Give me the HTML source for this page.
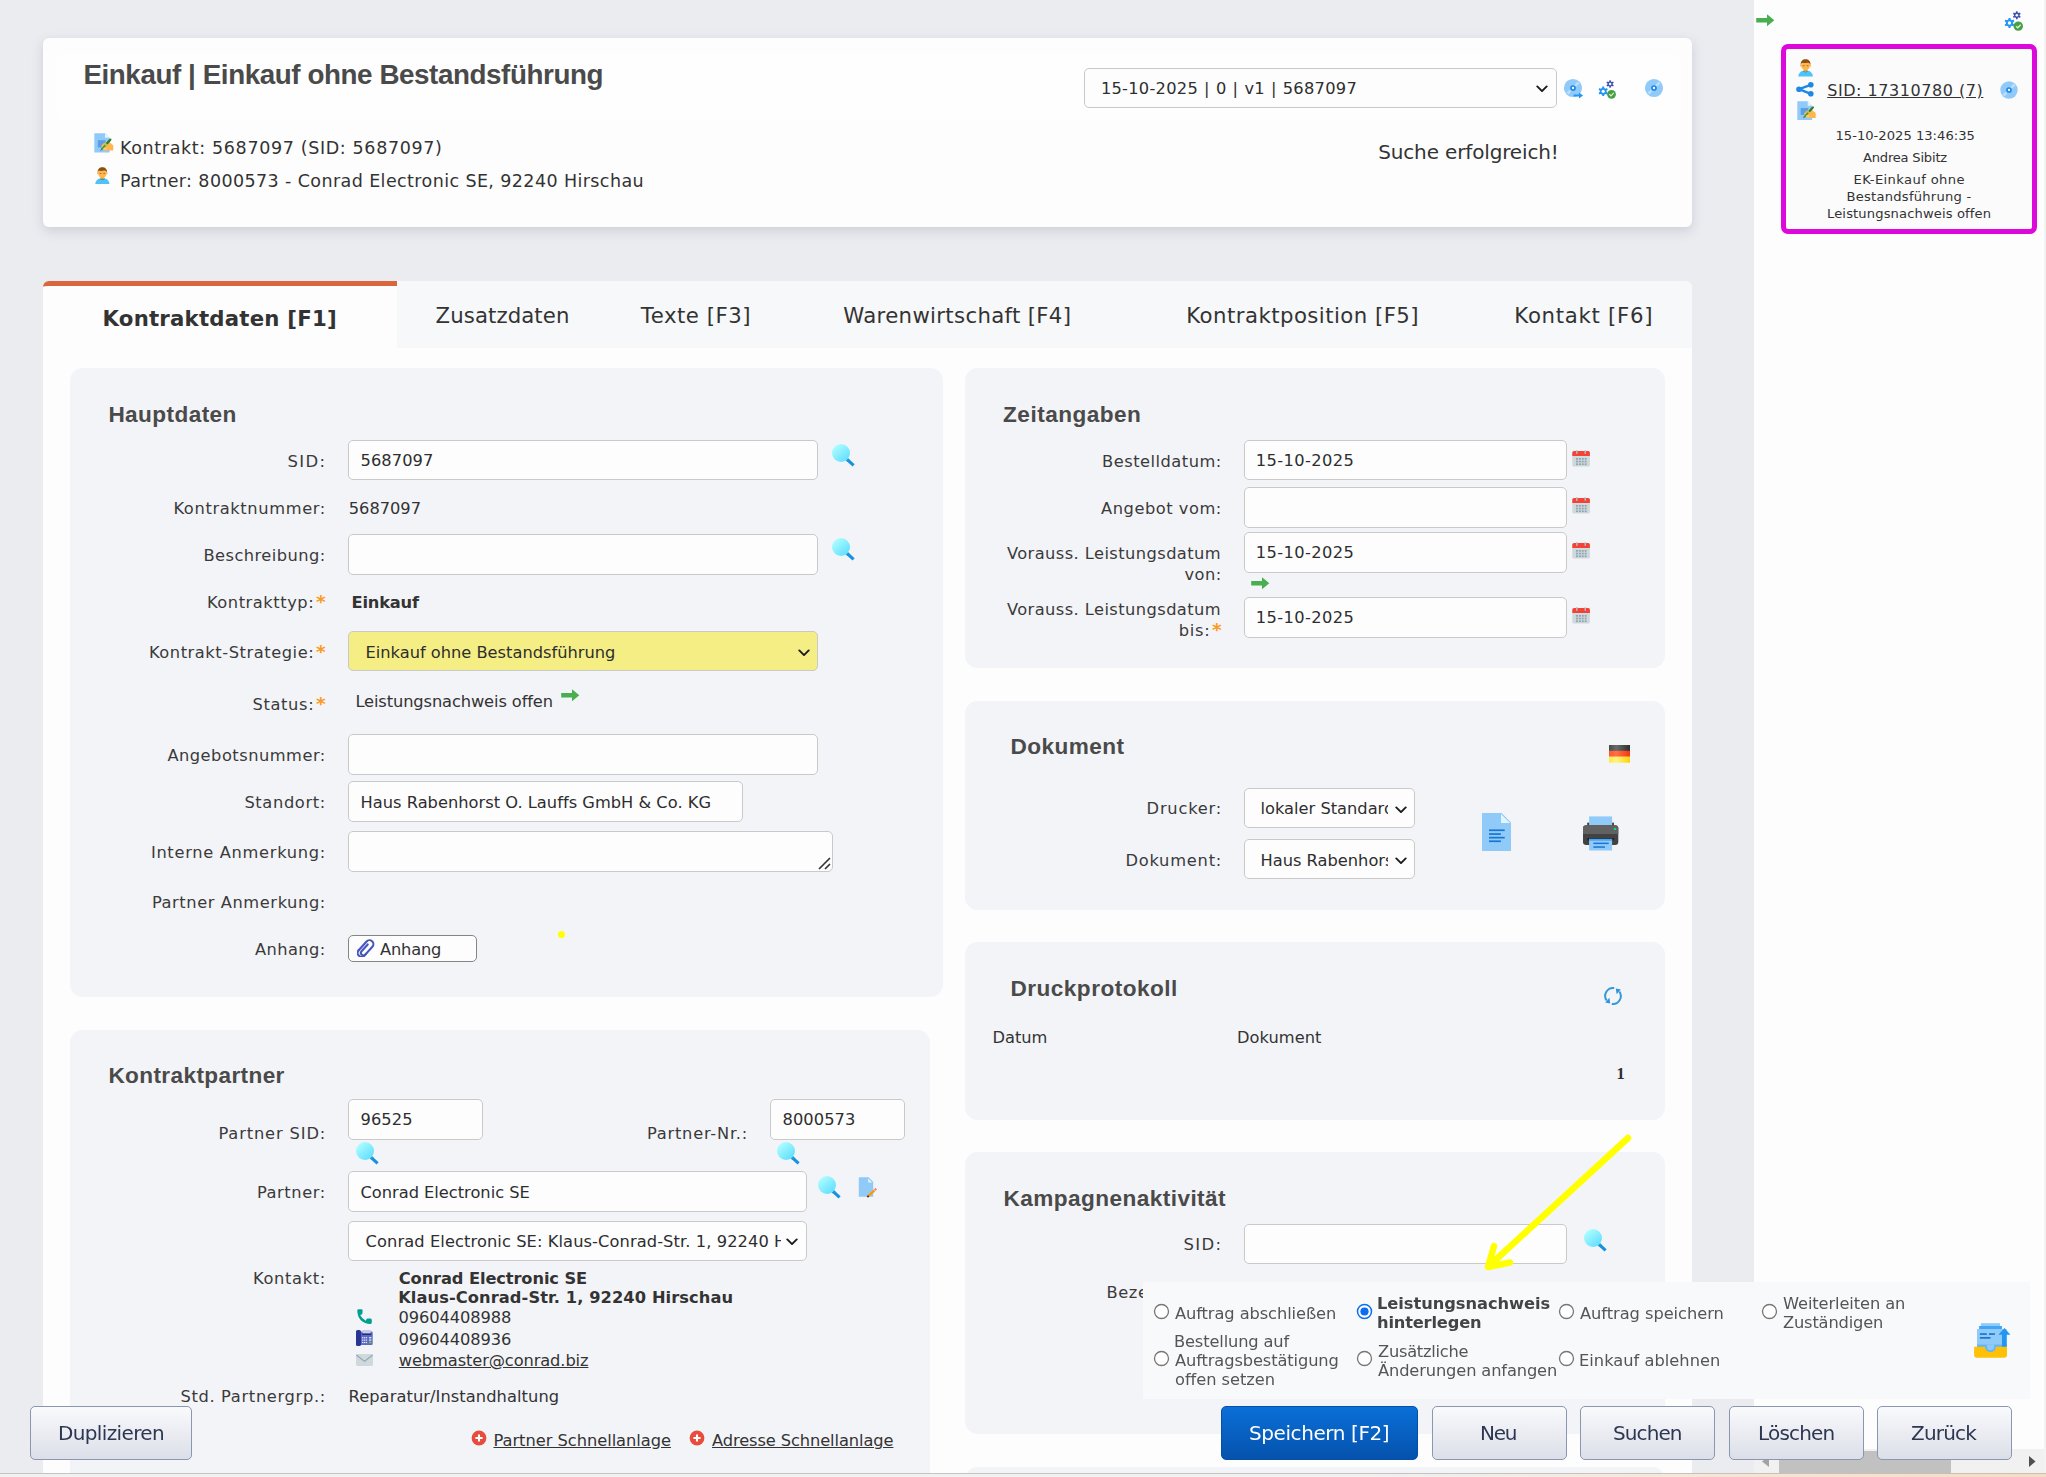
<!DOCTYPE html>
<html lang="de"><head><meta charset="utf-8"><title>Einkauf | Einkauf ohne Bestandsführung</title>
<style>
html,body{margin:0;padding:0;}
body{width:2046px;height:1477px;position:relative;overflow:hidden;background:#ebecf0;font-family:'DejaVu Sans', 'Liberation Sans', sans-serif;}
.b{position:absolute;box-sizing:border-box;margin:0;padding:0;}
.t{position:absolute;white-space:nowrap;margin:0;padding:0;line-height:normal;}
</style></head><body>
<header class="b" style="left:43px;top:38px;width:1649px;height:189px;background:#fdfdfe;border-radius:6px;box-shadow:0 4px 12px rgba(110,115,140,.24);"></header>
<div class="b" style="left:56px;top:54px;width:1625px;height:66px;background:#fefefe;border-radius:8px;"></div>
<nav class="b" style="left:43px;top:281px;width:1649px;height:67px;background:#f7f8fa;border-radius:6px 6px 0 0;"></nav>
<main class="b" style="left:43px;top:347.6px;width:1649px;height:1129.4px;background:#fdfdfe;"></main>
<div class="b" style="left:43px;top:281px;width:354px;height:67px;background:#fdfdfe;border-top:5px solid #d9663f;border-radius:6px 0 0 0;"></div>
<section class="b" style="left:70px;top:368px;width:873px;height:629px;background:#f3f4f8;border-radius:12.5px;"></section>
<section class="b" style="left:70px;top:1030px;width:860px;height:470px;background:#f3f4f8;border-radius:12.5px;"></section>
<section class="b" style="left:965px;top:368px;width:700px;height:300px;background:#f3f4f8;border-radius:12.5px;"></section>
<section class="b" style="left:965px;top:701px;width:700px;height:209px;background:#f3f4f8;border-radius:12.5px;"></section>
<section class="b" style="left:965px;top:942px;width:700px;height:178px;background:#f3f4f8;border-radius:12.5px;"></section>
<section class="b" style="left:965px;top:1152px;width:700px;height:282px;background:#f3f4f8;border-radius:12.5px;"></section>
<section class="b" style="left:965px;top:1467px;width:700px;height:133px;background:#f3f4f8;border-radius:12.5px;"></section>
<aside class="b" style="left:1754px;top:0px;width:290px;height:1477px;background:#fdfdfd;"></aside>
<div class="b" style="left:2044px;top:0px;width:2px;height:1477px;background:#f3f3f3;"></div>
<div class="b" style="left:1781px;top:44px;width:256px;height:190px;background:#fbfbfc;border-radius:7px;border:5px solid #dd08dc;"></div>
<h1 class="t" style="left:83.40px;top:59.00px;font:bold 27.8px 'Liberation Sans', 'DejaVu Sans', sans-serif;color:#4a4a4a;letter-spacing:-0.429px;">Einkauf | Einkauf ohne Bestandsführung</h1>
<span class="t" style="left:120.00px;top:138.00px;font:normal 17.5px 'DejaVu Sans', 'Liberation Sans', sans-serif;color:#333;letter-spacing:0.642px;">Kontrakt: 5687097 (SID: 5687097)</span>
<span class="t" style="left:120.00px;top:171.00px;font:normal 17.5px 'DejaVu Sans', 'Liberation Sans', sans-serif;color:#333;letter-spacing:0.401px;">Partner: 8000573 - Conrad Electronic SE, 92240 Hirschau</span>
<span class="t" style="left:1378.20px;top:140.00px;font:normal 20px 'DejaVu Sans', 'Liberation Sans', sans-serif;color:#333;letter-spacing:-0.146px;">Suche erfolgreich!</span>
<div class="b" style="left:1084px;top:68px;width:473px;height:40px;background:#fdfdfe;border-radius:5px;border:1px solid #c9c9c9;"></div>
<span class="t" style="left:1100.90px;top:79.00px;font:normal 16.25px 'DejaVu Sans', 'Liberation Sans', sans-serif;color:#2e2e2e;letter-spacing:0.270px;word-spacing:0.627px;">15-10-2025 | 0 | v1 | 5687097</span>
<svg class="b" style="left:1536.1px;top:84.5px;" width="12" height="8" viewBox="0 0 12 8"><path d="M1.3 1.4 L6 6.1 L10.7 1.4" fill="none" stroke="#1a1a1a" stroke-width="1.9" stroke-linecap="round" stroke-linejoin="round"/></svg>
<span class="t" style="left:102.50px;top:306.00px;font:bold 21.25px 'DejaVu Sans', 'Liberation Sans', sans-serif;color:#333;letter-spacing:0.221px;">Kontraktdaten [F1]</span>
<span class="t" style="left:435.60px;top:303.00px;font:normal 21.25px 'DejaVu Sans', 'Liberation Sans', sans-serif;color:#333;letter-spacing:0.078px;">Zusatzdaten</span>
<span class="t" style="left:640.80px;top:303.00px;font:normal 21.25px 'DejaVu Sans', 'Liberation Sans', sans-serif;color:#333;letter-spacing:0.518px;">Texte [F3]</span>
<span class="t" style="left:843.30px;top:303.00px;font:normal 21.25px 'DejaVu Sans', 'Liberation Sans', sans-serif;color:#333;letter-spacing:0.321px;">Warenwirtschaft [F4]</span>
<span class="t" style="left:1186.30px;top:303.00px;font:normal 21.25px 'DejaVu Sans', 'Liberation Sans', sans-serif;color:#333;letter-spacing:0.448px;">Kontraktposition [F5]</span>
<span class="t" style="left:1514.30px;top:303.00px;font:normal 21.25px 'DejaVu Sans', 'Liberation Sans', sans-serif;color:#333;letter-spacing:0.716px;">Kontakt [F6]</span>
<h2 class="t" style="left:108.40px;top:402.00px;font:bold 22.6px 'Liberation Sans', 'DejaVu Sans', sans-serif;color:#4a4a4a;letter-spacing:0.415px;">Hauptdaten</h2>
<label class="t" style="left:287.56px;top:452.00px;font:normal 16.45px 'DejaVu Sans', 'Liberation Sans', sans-serif;color:#3a3a3a;letter-spacing:1.300px;">SID:</label>
<div class="b" style="left:348px;top:440px;width:470px;height:40px;background:#fdfdfe;border-radius:5px;border:1px solid #c9c9c9;"></div>
<span class="t" style="left:360.60px;top:451.00px;font:normal 16.25px 'DejaVu Sans', 'Liberation Sans', sans-serif;color:#2e2e2e;letter-spacing:0.050px;">5687097</span>
<label class="t" style="left:173.40px;top:499.00px;font:normal 16.25px 'DejaVu Sans', 'Liberation Sans', sans-serif;color:#3a3a3a;letter-spacing:0.634px;">Kontraktnummer:</label>
<span class="t" style="left:348.80px;top:499.00px;font:normal 16.25px 'DejaVu Sans', 'Liberation Sans', sans-serif;color:#333;letter-spacing:-0.030px;">5687097</span>
<label class="t" style="left:203.40px;top:546.00px;font:normal 16.25px 'DejaVu Sans', 'Liberation Sans', sans-serif;color:#3a3a3a;letter-spacing:0.458px;">Beschreibung:</label>
<div class="b" style="left:348px;top:534px;width:470px;height:41px;background:#fdfdfe;border-radius:5px;border:1px solid #c9c9c9;"></div>
<span class="t" style="left:316.10px;top:591.00px;font:bold 18.5px 'DejaVu Sans', 'Liberation Sans', sans-serif;color:#fb9a22;">*</span>
<label class="t" style="left:206.90px;top:593.00px;font:normal 16.25px 'DejaVu Sans', 'Liberation Sans', sans-serif;color:#3a3a3a;letter-spacing:0.556px;">Kontrakttyp:</label>
<span class="t" style="left:351.50px;top:593.00px;font:bold 16.25px 'DejaVu Sans', 'Liberation Sans', sans-serif;color:#333;letter-spacing:-0.180px;">Einkauf</span>
<span class="t" style="left:316.10px;top:641.00px;font:bold 18.5px 'DejaVu Sans', 'Liberation Sans', sans-serif;color:#fb9a22;">*</span>
<label class="t" style="left:148.90px;top:643.00px;font:normal 16.25px 'DejaVu Sans', 'Liberation Sans', sans-serif;color:#3a3a3a;letter-spacing:0.557px;">Kontrakt-Strategie:</label>
<div class="b" style="left:348px;top:631px;width:470px;height:40px;background:#f5ee84;border-radius:5px;border:1px solid #c9c9c9;"></div>
<span class="t" style="left:365.50px;top:643.00px;font:normal 16.25px 'DejaVu Sans', 'Liberation Sans', sans-serif;color:#2e2e2e;letter-spacing:-0.006px;">Einkauf ohne Bestandsführung</span>
<svg class="b" style="left:797.6px;top:649.0px;" width="12" height="8" viewBox="0 0 12 8"><path d="M1.3 1.4 L6 6.1 L10.7 1.4" fill="none" stroke="#1a1a1a" stroke-width="1.9" stroke-linecap="round" stroke-linejoin="round"/></svg>
<span class="t" style="left:316.10px;top:693.00px;font:bold 18.5px 'DejaVu Sans', 'Liberation Sans', sans-serif;color:#fb9a22;">*</span>
<label class="t" style="left:252.40px;top:695.00px;font:normal 16.25px 'DejaVu Sans', 'Liberation Sans', sans-serif;color:#3a3a3a;letter-spacing:0.670px;">Status:</label>
<span class="t" style="left:355.40px;top:692.00px;font:normal 16.25px 'DejaVu Sans', 'Liberation Sans', sans-serif;color:#333;letter-spacing:-0.112px;">Leistungsnachweis offen</span>
<label class="t" style="left:167.40px;top:746.00px;font:normal 16.25px 'DejaVu Sans', 'Liberation Sans', sans-serif;color:#3a3a3a;letter-spacing:0.495px;">Angebotsnummer:</label>
<div class="b" style="left:348px;top:734px;width:470px;height:41px;background:#fdfdfe;border-radius:5px;border:1px solid #c9c9c9;"></div>
<label class="t" style="left:244.40px;top:793.00px;font:normal 16.25px 'DejaVu Sans', 'Liberation Sans', sans-serif;color:#3a3a3a;letter-spacing:0.643px;">Standort:</label>
<div class="b" style="left:348px;top:781px;width:395px;height:41px;background:#fdfdfe;border-radius:5px;border:1px solid #c9c9c9;"></div>
<span class="t" style="left:360.50px;top:793.00px;font:normal 16.25px 'DejaVu Sans', 'Liberation Sans', sans-serif;color:#2e2e2e;letter-spacing:0.016px;">Haus Rabenhorst O. Lauffs GmbH &amp; Co. KG</span>
<label class="t" style="left:150.90px;top:843.00px;font:normal 16.25px 'DejaVu Sans', 'Liberation Sans', sans-serif;color:#3a3a3a;letter-spacing:0.696px;">Interne Anmerkung:</label>
<div class="b" style="left:348px;top:831px;width:485px;height:41px;background:#fdfdfe;border-radius:5px;border:1px solid #c9c9c9;"></div>
<svg class="b" style="left:817px;top:856px;" width="14" height="14" viewBox="0 0 14 14"><path d="M2 13 L13 2 M8 13 L13 8" stroke="#333" stroke-width="1.6" fill="none"/></svg>
<label class="t" style="left:151.90px;top:893.00px;font:normal 16.25px 'DejaVu Sans', 'Liberation Sans', sans-serif;color:#3a3a3a;letter-spacing:0.584px;">Partner Anmerkung:</label>
<label class="t" style="left:254.90px;top:940.00px;font:normal 16.25px 'DejaVu Sans', 'Liberation Sans', sans-serif;color:#3a3a3a;letter-spacing:0.436px;">Anhang:</label>
<div class="b" style="left:348px;top:935px;width:129px;height:27px;background:#fdfdfe;border-radius:5px;border:1px solid #858585;"></div>
<span class="t" style="left:380.00px;top:940.00px;font:normal 16.25px 'DejaVu Sans', 'Liberation Sans', sans-serif;color:#333;letter-spacing:-0.194px;">Anhang</span>
<div class="b" style="left:557.5px;top:930.7px;width:7.0px;height:7.0px;background:#ffff00;border-radius:3.5px;"></div>
<h2 class="t" style="left:108.40px;top:1063.00px;font:bold 22.6px 'Liberation Sans', 'DejaVu Sans', sans-serif;color:#4a4a4a;letter-spacing:0.376px;">Kontraktpartner</h2>
<label class="t" style="left:218.40px;top:1124.00px;font:normal 16.25px 'DejaVu Sans', 'Liberation Sans', sans-serif;color:#3a3a3a;letter-spacing:0.869px;">Partner SID:</label>
<div class="b" style="left:348px;top:1099px;width:135px;height:41px;background:#fdfdfe;border-radius:5px;border:1px solid #c9c9c9;"></div>
<span class="t" style="left:360.60px;top:1110.00px;font:normal 16.25px 'DejaVu Sans', 'Liberation Sans', sans-serif;color:#2e2e2e;letter-spacing:0.050px;">96525</span>
<label class="t" style="left:646.90px;top:1124.00px;font:normal 16.25px 'DejaVu Sans', 'Liberation Sans', sans-serif;color:#3a3a3a;letter-spacing:0.773px;">Partner-Nr.:</label>
<div class="b" style="left:770px;top:1099px;width:135px;height:41px;background:#fdfdfe;border-radius:5px;border:1px solid #c9c9c9;"></div>
<span class="t" style="left:782.60px;top:1110.00px;font:normal 16.25px 'DejaVu Sans', 'Liberation Sans', sans-serif;color:#2e2e2e;letter-spacing:0.050px;">8000573</span>
<label class="t" style="left:256.90px;top:1183.00px;font:normal 16.25px 'DejaVu Sans', 'Liberation Sans', sans-serif;color:#3a3a3a;letter-spacing:0.590px;">Partner:</label>
<div class="b" style="left:348px;top:1171px;width:459px;height:41px;background:#fdfdfe;border-radius:5px;border:1px solid #c9c9c9;"></div>
<span class="t" style="left:360.50px;top:1183.00px;font:normal 16.25px 'DejaVu Sans', 'Liberation Sans', sans-serif;color:#2e2e2e;letter-spacing:-0.015px;">Conrad Electronic SE</span>
<div class="b" style="left:348px;top:1221px;width:459px;height:40px;background:#fdfdfe;border-radius:5px;border:1px solid #c9c9c9;"></div>
<div class="b" style="left:349px;top:1222px;width:431.5px;height:38px;overflow:hidden;">
<span class="t" style="left:16.60px;top:10.00px;font:normal 16.25px 'DejaVu Sans', 'Liberation Sans', sans-serif;color:#2e2e2e;letter-spacing:0.090px;">Conrad Electronic SE: Klaus-Conrad-Str. 1, 92240 Hirschau</span>
</div>
<svg class="b" style="left:786.0px;top:1238.3px;" width="12" height="8" viewBox="0 0 12 8"><path d="M1.3 1.4 L6 6.1 L10.7 1.4" fill="none" stroke="#1a1a1a" stroke-width="1.9" stroke-linecap="round" stroke-linejoin="round"/></svg>
<label class="t" style="left:252.90px;top:1269.00px;font:normal 16.25px 'DejaVu Sans', 'Liberation Sans', sans-serif;color:#3a3a3a;letter-spacing:0.672px;">Kontakt:</label>
<span class="t" style="left:398.80px;top:1269.00px;font:bold 16.25px 'DejaVu Sans', 'Liberation Sans', sans-serif;color:#333;letter-spacing:-0.112px;">Conrad Electronic SE</span>
<span class="t" style="left:398.20px;top:1288.00px;font:bold 16.25px 'DejaVu Sans', 'Liberation Sans', sans-serif;color:#333;letter-spacing:0.083px;">Klaus-Conrad-Str. 1, 92240 Hirschau</span>
<span class="t" style="left:398.50px;top:1308.00px;font:normal 16.25px 'DejaVu Sans', 'Liberation Sans', sans-serif;color:#333;letter-spacing:-0.089px;">09604408988</span>
<span class="t" style="left:398.50px;top:1330.00px;font:normal 16.25px 'DejaVu Sans', 'Liberation Sans', sans-serif;color:#333;letter-spacing:-0.089px;">09604408936</span>
<a class="t" style="left:398.80px;top:1351.00px;font:normal 16.25px 'DejaVu Sans', 'Liberation Sans', sans-serif;color:#333;letter-spacing:-0.110px;text-decoration:underline;">webmaster@conrad.biz</a>
<label class="t" style="left:180.40px;top:1387.00px;font:normal 16.25px 'DejaVu Sans', 'Liberation Sans', sans-serif;color:#3a3a3a;letter-spacing:0.676px;">Std. Partnergrp.:</label>
<span class="t" style="left:348.50px;top:1387.00px;font:normal 16.25px 'DejaVu Sans', 'Liberation Sans', sans-serif;color:#333;letter-spacing:0.077px;">Reparatur/Instandhaltung</span>
<a class="t" style="left:493.50px;top:1431.00px;font:normal 16.25px 'DejaVu Sans', 'Liberation Sans', sans-serif;color:#333;letter-spacing:-0.032px;text-decoration:underline;">Partner Schnellanlage</a>
<a class="t" style="left:712.00px;top:1431.00px;font:normal 16.25px 'DejaVu Sans', 'Liberation Sans', sans-serif;color:#333;letter-spacing:-0.099px;text-decoration:underline;">Adresse Schnellanlage</a>
<h2 class="t" style="left:1003.10px;top:402.00px;font:bold 22.6px 'Liberation Sans', 'DejaVu Sans', sans-serif;color:#4a4a4a;letter-spacing:0.473px;">Zeitangaben</h2>
<label class="t" style="left:1102.10px;top:452.00px;font:normal 16.25px 'DejaVu Sans', 'Liberation Sans', sans-serif;color:#3a3a3a;letter-spacing:0.493px;">Bestelldatum:</label>
<div class="b" style="left:1244px;top:440px;width:323px;height:40px;background:#fdfdfe;border-radius:5px;border:1px solid #c9c9c9;"></div>
<span class="t" style="left:1255.80px;top:451.00px;font:normal 16.25px 'DejaVu Sans', 'Liberation Sans', sans-serif;color:#2e2e2e;letter-spacing:0.390px;">15-10-2025</span>
<label class="t" style="left:1101.10px;top:499.00px;font:normal 16.25px 'DejaVu Sans', 'Liberation Sans', sans-serif;color:#3a3a3a;letter-spacing:0.526px;">Angebot vom:</label>
<div class="b" style="left:1244px;top:487px;width:323px;height:41px;background:#fdfdfe;border-radius:5px;border:1px solid #c9c9c9;"></div>
<label class="t" style="left:1006.90px;top:544.00px;font:normal 16.25px 'DejaVu Sans', 'Liberation Sans', sans-serif;color:#3a3a3a;letter-spacing:0.430px;">Vorauss. Leistungsdatum</label>
<label class="t" style="left:1184.40px;top:565.00px;font:normal 16.25px 'DejaVu Sans', 'Liberation Sans', sans-serif;color:#3a3a3a;letter-spacing:0.514px;">von:</label>
<div class="b" style="left:1244px;top:532px;width:323px;height:41px;background:#fdfdfe;border-radius:5px;border:1px solid #c9c9c9;"></div>
<span class="t" style="left:1255.80px;top:543.00px;font:normal 16.25px 'DejaVu Sans', 'Liberation Sans', sans-serif;color:#2e2e2e;letter-spacing:0.390px;">15-10-2025</span>
<label class="t" style="left:1006.90px;top:600.00px;font:normal 16.25px 'DejaVu Sans', 'Liberation Sans', sans-serif;color:#3a3a3a;letter-spacing:0.430px;">Vorauss. Leistungsdatum</label>
<span class="t" style="left:1212.10px;top:619.00px;font:bold 18.5px 'DejaVu Sans', 'Liberation Sans', sans-serif;color:#fb9a22;">*</span>
<label class="t" style="left:1178.70px;top:621.00px;font:normal 16.25px 'DejaVu Sans', 'Liberation Sans', sans-serif;color:#3a3a3a;letter-spacing:0.735px;">bis:</label>
<div class="b" style="left:1244px;top:597px;width:323px;height:41px;background:#fdfdfe;border-radius:5px;border:1px solid #c9c9c9;"></div>
<span class="t" style="left:1255.80px;top:608.00px;font:normal 16.25px 'DejaVu Sans', 'Liberation Sans', sans-serif;color:#2e2e2e;letter-spacing:0.390px;">15-10-2025</span>
<h2 class="t" style="left:1010.40px;top:734.00px;font:bold 22.6px 'Liberation Sans', 'DejaVu Sans', sans-serif;color:#4a4a4a;letter-spacing:0.466px;">Dokument</h2>
<label class="t" style="left:1146.60px;top:799.00px;font:normal 16.25px 'DejaVu Sans', 'Liberation Sans', sans-serif;color:#3a3a3a;letter-spacing:0.793px;">Drucker:</label>
<div class="b" style="left:1244px;top:788px;width:171px;height:40px;background:#fdfdfe;border-radius:5px;border:1px solid #c9c9c9;"></div>
<div class="b" style="left:1245px;top:789px;width:142.8px;height:38px;overflow:hidden;">
<span class="t" style="left:15.50px;top:10.00px;font:normal 16.25px 'DejaVu Sans', 'Liberation Sans', sans-serif;color:#2e2e2e;">lokaler Standarddrucker</span>
</div>
<svg class="b" style="left:1394.6px;top:805.5px;" width="12" height="8" viewBox="0 0 12 8"><path d="M1.3 1.4 L6 6.1 L10.7 1.4" fill="none" stroke="#1a1a1a" stroke-width="1.9" stroke-linecap="round" stroke-linejoin="round"/></svg>
<label class="t" style="left:1125.40px;top:851.00px;font:normal 16.25px 'DejaVu Sans', 'Liberation Sans', sans-serif;color:#3a3a3a;letter-spacing:0.780px;">Dokument:</label>
<div class="b" style="left:1244px;top:839px;width:171px;height:40px;background:#fdfdfe;border-radius:5px;border:1px solid #c9c9c9;"></div>
<div class="b" style="left:1245px;top:840px;width:142.8px;height:38px;overflow:hidden;">
<span class="t" style="left:15.50px;top:11.00px;font:normal 16.25px 'DejaVu Sans', 'Liberation Sans', sans-serif;color:#2e2e2e;">Haus Rabenhorst</span>
</div>
<svg class="b" style="left:1394.6px;top:856.5px;" width="12" height="8" viewBox="0 0 12 8"><path d="M1.3 1.4 L6 6.1 L10.7 1.4" fill="none" stroke="#1a1a1a" stroke-width="1.9" stroke-linecap="round" stroke-linejoin="round"/></svg>
<h2 class="t" style="left:1010.40px;top:976.00px;font:bold 22.6px 'Liberation Sans', 'DejaVu Sans', sans-serif;color:#4a4a4a;letter-spacing:0.484px;">Druckprotokoll</h2>
<span class="t" style="left:992.50px;top:1028.00px;font:normal 16.25px 'DejaVu Sans', 'Liberation Sans', sans-serif;color:#333;letter-spacing:-0.035px;">Datum</span>
<span class="t" style="left:1237.00px;top:1028.00px;font:normal 16.25px 'DejaVu Sans', 'Liberation Sans', sans-serif;color:#333;letter-spacing:0.030px;">Dokument</span>
<span class="t" style="left:1616.50px;top:1064.00px;font:bold 16.5px 'Liberation Serif', 'DejaVu Serif', serif;color:#2e2e2e;">1</span>
<h2 class="t" style="left:1003.40px;top:1186.00px;font:bold 22.6px 'Liberation Sans', 'DejaVu Sans', sans-serif;color:#4a4a4a;letter-spacing:0.443px;">Kampagnenaktivität</h2>
<label class="t" style="left:1183.56px;top:1235.00px;font:normal 16.45px 'DejaVu Sans', 'Liberation Sans', sans-serif;color:#3a3a3a;letter-spacing:1.300px;">SID:</label>
<div class="b" style="left:1244px;top:1224px;width:323px;height:40px;background:#fdfdfe;border-radius:5px;border:1px solid #c9c9c9;"></div>
<span class="t" style="left:1106.50px;top:1283.00px;font:normal 16.25px 'DejaVu Sans', 'Liberation Sans', sans-serif;color:#3a3a3a;letter-spacing:0.600px;">Bezeichnung:</span>
<div class="b" style="left:1143px;top:1282px;width:887px;height:117px;background:#f8f9fb;"></div>
<svg class="b" style="left:1153.2px;top:1302.6px;" width="17" height="17" viewBox="0 0 17 17"><circle cx="8.5" cy="8.5" r="7" fill="#fff" stroke="#767676" stroke-width="1.3"/></svg>
<span class="t" style="left:1175.00px;top:1304.00px;font:normal 16.25px 'DejaVu Sans', 'Liberation Sans', sans-serif;color:#555;letter-spacing:-0.087px;will-change:transform;">Auftrag abschließen</span>
<svg class="b" style="left:1356.0px;top:1302.6px;" width="17" height="17" viewBox="0 0 17 17"><circle cx="8.5" cy="8.5" r="7" fill="#fff" stroke="#0b6ff0" stroke-width="1.5"/><circle cx="8.5" cy="8.5" r="4.1" fill="#0b6ff0"/></svg>
<span class="t" style="left:1377.00px;top:1294.00px;font:bold 16.25px 'DejaVu Sans', 'Liberation Sans', sans-serif;color:#444;letter-spacing:-0.042px;will-change:transform;">Leistungsnachweis</span>
<span class="t" style="left:1377.00px;top:1313.00px;font:bold 16.25px 'DejaVu Sans', 'Liberation Sans', sans-serif;color:#444;letter-spacing:-0.175px;will-change:transform;">hinterlegen</span>
<svg class="b" style="left:1558.1px;top:1302.6px;" width="17" height="17" viewBox="0 0 17 17"><circle cx="8.5" cy="8.5" r="7" fill="#fff" stroke="#767676" stroke-width="1.3"/></svg>
<span class="t" style="left:1580.00px;top:1304.00px;font:normal 16.25px 'DejaVu Sans', 'Liberation Sans', sans-serif;color:#555;letter-spacing:-0.048px;will-change:transform;">Auftrag speichern</span>
<svg class="b" style="left:1760.5px;top:1302.6px;" width="17" height="17" viewBox="0 0 17 17"><circle cx="8.5" cy="8.5" r="7" fill="#fff" stroke="#767676" stroke-width="1.3"/></svg>
<span class="t" style="left:1783.00px;top:1294.00px;font:normal 16.25px 'DejaVu Sans', 'Liberation Sans', sans-serif;color:#555;letter-spacing:-0.107px;will-change:transform;">Weiterleiten an</span>
<span class="t" style="left:1783.00px;top:1313.00px;font:normal 16.25px 'DejaVu Sans', 'Liberation Sans', sans-serif;color:#555;letter-spacing:-0.167px;will-change:transform;">Zuständigen</span>
<svg class="b" style="left:1153.2px;top:1350px;" width="17" height="17" viewBox="0 0 17 17"><circle cx="8.5" cy="8.5" r="7" fill="#fff" stroke="#767676" stroke-width="1.3"/></svg>
<span class="t" style="left:1174.00px;top:1332.00px;font:normal 16.25px 'DejaVu Sans', 'Liberation Sans', sans-serif;color:#555;letter-spacing:-0.142px;will-change:transform;">Bestellung auf</span>
<span class="t" style="left:1175.00px;top:1351.00px;font:normal 16.25px 'DejaVu Sans', 'Liberation Sans', sans-serif;color:#555;letter-spacing:-0.114px;will-change:transform;">Auftragsbestätigung</span>
<span class="t" style="left:1175.00px;top:1370.00px;font:normal 16.25px 'DejaVu Sans', 'Liberation Sans', sans-serif;color:#555;letter-spacing:-0.042px;will-change:transform;">offen setzen</span>
<svg class="b" style="left:1356.0px;top:1350px;" width="17" height="17" viewBox="0 0 17 17"><circle cx="8.5" cy="8.5" r="7" fill="#fff" stroke="#767676" stroke-width="1.3"/></svg>
<span class="t" style="left:1378.00px;top:1342.00px;font:normal 16.25px 'DejaVu Sans', 'Liberation Sans', sans-serif;color:#555;letter-spacing:-0.252px;will-change:transform;">Zusätzliche</span>
<span class="t" style="left:1378.00px;top:1361.00px;font:normal 16.25px 'DejaVu Sans', 'Liberation Sans', sans-serif;color:#555;letter-spacing:-0.130px;will-change:transform;">Änderungen anfangen</span>
<svg class="b" style="left:1558.1px;top:1350px;" width="17" height="17" viewBox="0 0 17 17"><circle cx="8.5" cy="8.5" r="7" fill="#fff" stroke="#767676" stroke-width="1.3"/></svg>
<span class="t" style="left:1579.00px;top:1351.00px;font:normal 16.25px 'DejaVu Sans', 'Liberation Sans', sans-serif;color:#555;letter-spacing:0.018px;will-change:transform;">Einkauf ablehnen</span>
<div class="b" style="left:1754px;top:1449px;width:290px;height:24px;background:#f1f1f1;"></div>
<div class="b" style="left:1779px;top:1451px;width:172px;height:21.5px;background:#c1c1c1;"></div>
<svg class="b" style="left:1762px;top:1456px;" width="8" height="12" viewBox="0 0 8 12"><path d="M7 0 L7 11 L0 5.5 Z" fill="#a3a3a3"/></svg>
<svg class="b" style="left:2029px;top:1456px;" width="8" height="12" viewBox="0 0 8 12"><path d="M0 0 L0 11 L6.5 5.5 Z" fill="#505050"/></svg>
<button class="b" style="left:30px;top:1406px;width:162px;height:54px;background:linear-gradient(#f9fafc,#dcdfe8);border-radius:5px;border:1px solid #8b96b0;"></button>
<span class="t" style="left:58.00px;top:1421.00px;font:normal 20px 'DejaVu Sans', 'Liberation Sans', sans-serif;color:#2d3752;letter-spacing:-0.633px;will-change:transform;">Duplizieren</span>
<button class="b" style="left:1221px;top:1406px;width:197px;height:54px;background:linear-gradient(#0a6fd8,#0552ac);border-radius:5px;border:1px solid #0450a8;"></button>
<span class="t" style="left:1249.00px;top:1421.00px;font:normal 20px 'DejaVu Sans', 'Liberation Sans', sans-serif;color:#fff;letter-spacing:-0.413px;will-change:transform;">Speichern [F2]</span>
<button class="b" style="left:1432px;top:1406px;width:135px;height:54px;background:linear-gradient(#f9fafc,#dcdfe8);border-radius:5px;border:1px solid #8b96b0;"></button>
<span class="t" style="left:1480.00px;top:1421.00px;font:normal 20px 'DejaVu Sans', 'Liberation Sans', sans-serif;color:#2d3752;letter-spacing:-1.233px;will-change:transform;">Neu</span>
<button class="b" style="left:1580px;top:1406px;width:135px;height:54px;background:linear-gradient(#f9fafc,#dcdfe8);border-radius:5px;border:1px solid #8b96b0;"></button>
<span class="t" style="left:1613.00px;top:1421.00px;font:normal 20px 'DejaVu Sans', 'Liberation Sans', sans-serif;color:#2d3752;letter-spacing:-0.910px;will-change:transform;">Suchen</span>
<button class="b" style="left:1729px;top:1406px;width:135px;height:54px;background:linear-gradient(#f9fafc,#dcdfe8);border-radius:5px;border:1px solid #8b96b0;"></button>
<span class="t" style="left:1758.00px;top:1421.00px;font:normal 20px 'DejaVu Sans', 'Liberation Sans', sans-serif;color:#2d3752;letter-spacing:-0.821px;will-change:transform;">Löschen</span>
<button class="b" style="left:1877px;top:1406px;width:135px;height:54px;background:linear-gradient(#f9fafc,#dcdfe8);border-radius:5px;border:1px solid #8b96b0;"></button>
<span class="t" style="left:1911.00px;top:1421.00px;font:normal 20px 'DejaVu Sans', 'Liberation Sans', sans-serif;color:#2d3752;letter-spacing:-0.814px;will-change:transform;">Zurück</span>
<a class="t" style="left:1827.20px;top:81.00px;font:normal 16px 'DejaVu Sans', 'Liberation Sans', sans-serif;color:#333;letter-spacing:0.549px;text-decoration:underline;">SID: 17310780 (7)</a>
<span class="t" style="left:1835.50px;top:128.00px;font:normal 13.1px 'DejaVu Sans', 'Liberation Sans', sans-serif;color:#333;letter-spacing:0.015px;">15-10-2025 13:46:35</span>
<span class="t" style="left:1863.00px;top:150.00px;font:normal 13.1px 'DejaVu Sans', 'Liberation Sans', sans-serif;color:#333;letter-spacing:-0.220px;">Andrea Sibitz</span>
<span class="t" style="left:1853.50px;top:172.00px;font:normal 13.1px 'DejaVu Sans', 'Liberation Sans', sans-serif;color:#333;letter-spacing:0.395px;">EK-Einkauf ohne</span>
<span class="t" style="left:1846.50px;top:189.00px;font:normal 13.1px 'DejaVu Sans', 'Liberation Sans', sans-serif;color:#333;letter-spacing:0.243px;">Bestandsführung -</span>
<span class="t" style="left:1827.00px;top:206.00px;font:normal 13.1px 'DejaVu Sans', 'Liberation Sans', sans-serif;color:#333;letter-spacing:0.126px;">Leistungsnachweis offen</span>
<svg class="b" style="left:1470px;top:1125px;" width="175" height="160" viewBox="0 0 175 160"><g stroke="#ffff00" stroke-width="6.5" stroke-linecap="round" stroke-linejoin="round" fill="none"><path d="M158 13 L19 141"/><path d="M24 121 L18 142 L40 137.5"/></g></svg>
<div class="b" style="left:0px;top:1473px;width:2046px;height:1px;background:linear-gradient(to right,#c3c3c3 0,#c3c3c3 70%,#cbbfb4 92%);"></div>
<div class="b" style="left:0px;top:1474px;width:2046px;height:3px;background:linear-gradient(to right,#f1f1f1 0,#f1f1f1 66%,#f6e6d6 84%,#f6dcc4 100%);"></div>
<svg class="b" style="left:94px;top:133px;" width="20.0" height="20.0" viewBox="0 0 20 20"><path d="M0.3 0.2 H11 L15.6 4.8 V19.6 H0.3 Z" fill="#90caf9"/><path d="M11 0.2 L15.6 4.8 H11 Z" fill="#e3f2fd"/><rect x="3.8" y="7.2" width="7.8" height="7.2" fill="#5a9fe6"/><path d="M7 13.6 C8.5 10.6 10.8 9.2 12.6 9.6 L15.6 9.2 L19.3 12.5 V17.6 H11 C9 17.6 8.6 16 9.6 15.4 Z" fill="#ffb74d"/><path d="M16.2 6.9 L7.4 16.7" stroke="#43a047" stroke-width="1.9"/><path d="M16.4 6.6 L13.2 10.2" stroke="#2e7d32" stroke-width="2.2" stroke-linecap="round"/><path d="M12.6 10.9 L11.4 12.2" stroke="#c0ca33" stroke-width="2.1"/><path d="M7.8 16.2 L6.6 17.6" stroke="#455a64" stroke-width="1"/><path d="M9.3 15.2 C10.6 14.4 12.2 14.6 13 15.4 L12.4 16.6 H9.8 Z" fill="#ffcc80"/></svg>
<svg class="b" style="left:94.8px;top:167.2px;" width="14.72" height="17.48" viewBox="0 0 16 19"><path d="M0.2 18.4 C0.6 14.6 3.2 12.8 5.2 12.4 L10.8 12.4 C12.8 12.8 15.4 14.6 15.8 18.4 Z" fill="#4fc3f7"/><path d="M5.4 12.3 Q8 14.6 10.6 12.3 L10.6 13 Q8 15.3 5.4 13 Z" fill="#0288d1"/><path d="M6 9.5 H10 V12.4 Q8 14 6 12.4 Z" fill="#ff9800"/><ellipse cx="8" cy="6.6" rx="4.7" ry="5.3" fill="#ffb74d"/><circle cx="3" cy="7" r="0.9" fill="#ffb74d"/><circle cx="13" cy="7" r="0.9" fill="#ffb74d"/><path d="M2.9 6.3 C2.4 2.4 5 0.3 8 0.3 C11 0.3 13.6 2.4 13.1 6.3 C12.4 4.4 11.4 3.6 10 3.9 C8.5 4.3 5.6 4.6 4.2 3.9 C3.6 4.5 3.1 5.2 2.9 6.3 Z" fill="#8d4e12"/><rect x="5" y="6.7" width="2" height="0.9" fill="#a1662f"/><rect x="9" y="6.7" width="2" height="0.9" fill="#a1662f"/></svg>
<svg class="b" style="left:1563.0px;top:77.9px;" width="21" height="21" viewBox="0 0 21 21"><circle cx="10" cy="10" r="9.1" fill="#90caf9"/><path d="M14.6 3.6 L16.6 5.5 L12.5 9 L11 7.5 Z M7.5 11 L9 12.5 L5.5 16.4 L3.5 14.5 Z" fill="#bbdefb"/><circle cx="10" cy="10" r="2" fill="#fff" stroke="#1e88e5" stroke-width="1.7"/><path d="M10.6 16.4 H16 V14.6 L20 17.5 L16 20.4 V18.6 H10.6 Z" fill="#2196f3"/></svg>
<svg class="b" style="left:1598.3px;top:79.8px;" width="20.0" height="20.0" viewBox="0 0 20 20"><path d="M4.12 7.97 L4.28 6.49 L6.12 6.49 L6.28 7.97 L7.54 8.70 L8.91 8.10 L9.83 9.69 L8.62 10.57 L8.62 12.03 L9.83 12.91 L8.91 14.50 L7.54 13.90 L6.28 14.63 L6.12 16.11 L4.28 16.11 L4.12 14.63 L2.86 13.90 L1.49 14.50 L0.57 12.91 L1.78 12.03 L1.78 10.57 L0.57 9.69 L1.49 8.10 L2.86 8.70 Z" fill="#2196f3"/><circle cx="5.2" cy="11.3" r="1.6" fill="#fff"/><path d="M11.27 1.43 L11.37 0.17 L12.83 0.17 L12.93 1.43 L13.91 1.99 L15.05 1.45 L15.78 2.72 L14.74 3.44 L14.74 4.56 L15.78 5.28 L15.05 6.55 L13.91 6.01 L12.93 6.57 L12.83 7.83 L11.37 7.83 L11.27 6.57 L10.29 6.01 L9.15 6.55 L8.42 5.28 L9.46 4.56 L9.46 3.44 L8.42 2.72 L9.15 1.45 L10.29 1.99 Z" fill="#3f51b5"/><circle cx="12.1" cy="4.0" r="1.2" fill="#fff"/><circle cx="13.5" cy="14.3" r="4.4" fill="#43a047"/><path d="M11.4 14.3 L13 15.9 L15.8 12.9" fill="none" stroke="#dcedc8" stroke-width="1.3"/></svg>
<svg class="b" style="left:1643.9px;top:77.9px;" width="21" height="21" viewBox="0 0 21 21"><circle cx="10" cy="10" r="9.1" fill="#90caf9"/><path d="M14.6 3.6 L16.6 5.5 L12.5 9 L11 7.5 Z M7.5 11 L9 12.5 L5.5 16.4 L3.5 14.5 Z" fill="#bbdefb"/><circle cx="10" cy="10" r="2" fill="#fff" stroke="#1e88e5" stroke-width="1.7"/></svg>
<svg class="b" style="left:1755.7px;top:14.4px;" width="19" height="13" viewBox="0 0 19 13"><path d="M0.2 4.1 H11 V0.2 L18.3 6.2 L11 12.3 V8.5 H0.2 Z" fill="#48ae4f"/></svg>
<svg class="b" style="left:2004.2px;top:11.3px;" width="21.200000000000003" height="21.200000000000003" viewBox="0 0 20 20"><path d="M4.12 7.97 L4.28 6.49 L6.12 6.49 L6.28 7.97 L7.54 8.70 L8.91 8.10 L9.83 9.69 L8.62 10.57 L8.62 12.03 L9.83 12.91 L8.91 14.50 L7.54 13.90 L6.28 14.63 L6.12 16.11 L4.28 16.11 L4.12 14.63 L2.86 13.90 L1.49 14.50 L0.57 12.91 L1.78 12.03 L1.78 10.57 L0.57 9.69 L1.49 8.10 L2.86 8.70 Z" fill="#2196f3"/><circle cx="5.2" cy="11.3" r="1.6" fill="#fff"/><path d="M11.27 1.43 L11.37 0.17 L12.83 0.17 L12.93 1.43 L13.91 1.99 L15.05 1.45 L15.78 2.72 L14.74 3.44 L14.74 4.56 L15.78 5.28 L15.05 6.55 L13.91 6.01 L12.93 6.57 L12.83 7.83 L11.37 7.83 L11.27 6.57 L10.29 6.01 L9.15 6.55 L8.42 5.28 L9.46 4.56 L9.46 3.44 L8.42 2.72 L9.15 1.45 L10.29 1.99 Z" fill="#3f51b5"/><circle cx="12.1" cy="4.0" r="1.2" fill="#fff"/><circle cx="13.5" cy="14.3" r="4.4" fill="#43a047"/><path d="M11.4 14.3 L13 15.9 L15.8 12.9" fill="none" stroke="#dcedc8" stroke-width="1.3"/></svg>
<svg class="b" style="left:1797.6px;top:59px;" width="15.2" height="18.05" viewBox="0 0 16 19"><path d="M0.2 18.4 C0.6 14.6 3.2 12.8 5.2 12.4 L10.8 12.4 C12.8 12.8 15.4 14.6 15.8 18.4 Z" fill="#4fc3f7"/><path d="M5.4 12.3 Q8 14.6 10.6 12.3 L10.6 13 Q8 15.3 5.4 13 Z" fill="#0288d1"/><path d="M6 9.5 H10 V12.4 Q8 14 6 12.4 Z" fill="#ff9800"/><ellipse cx="8" cy="6.6" rx="4.7" ry="5.3" fill="#ffb74d"/><circle cx="3" cy="7" r="0.9" fill="#ffb74d"/><circle cx="13" cy="7" r="0.9" fill="#ffb74d"/><path d="M2.9 6.3 C2.4 2.4 5 0.3 8 0.3 C11 0.3 13.6 2.4 13.1 6.3 C12.4 4.4 11.4 3.6 10 3.9 C8.5 4.3 5.6 4.6 4.2 3.9 C3.6 4.5 3.1 5.2 2.9 6.3 Z" fill="#8d4e12"/><rect x="5" y="6.7" width="2" height="0.9" fill="#a1662f"/><rect x="9" y="6.7" width="2" height="0.9" fill="#a1662f"/></svg>
<svg class="b" style="left:1795.8px;top:81.8px;" width="18" height="15" viewBox="0 0 18 15"><path d="M3 7.2 L14.8 2.8 M3 7.2 L14.8 11.8" stroke="#1e88e5" stroke-width="2.5" fill="none"/><circle cx="3" cy="7.2" r="2.8" fill="#1e88e5"/><circle cx="14.8" cy="2.8" r="2.8" fill="#1e88e5"/><circle cx="14.8" cy="11.8" r="2.8" fill="#1e88e5"/></svg>
<svg class="b" style="left:1797px;top:100.8px;" width="19.4" height="19.4" viewBox="0 0 20 20"><path d="M0.3 0.2 H11 L15.6 4.8 V19.6 H0.3 Z" fill="#90caf9"/><path d="M11 0.2 L15.6 4.8 H11 Z" fill="#e3f2fd"/><rect x="3.8" y="7.2" width="7.8" height="7.2" fill="#5a9fe6"/><path d="M7 13.6 C8.5 10.6 10.8 9.2 12.6 9.6 L15.6 9.2 L19.3 12.5 V17.6 H11 C9 17.6 8.6 16 9.6 15.4 Z" fill="#ffb74d"/><path d="M16.2 6.9 L7.4 16.7" stroke="#43a047" stroke-width="1.9"/><path d="M16.4 6.6 L13.2 10.2" stroke="#2e7d32" stroke-width="2.2" stroke-linecap="round"/><path d="M12.6 10.9 L11.4 12.2" stroke="#c0ca33" stroke-width="2.1"/><path d="M7.8 16.2 L6.6 17.6" stroke="#455a64" stroke-width="1"/><path d="M9.3 15.2 C10.6 14.4 12.2 14.6 13 15.4 L12.4 16.6 H9.8 Z" fill="#ffcc80"/></svg>
<svg class="b" style="left:1999.4px;top:79.5px;" width="21" height="21" viewBox="0 0 21 21"><circle cx="10" cy="10" r="8.7" fill="#90caf9"/><path d="M14.6 3.6 L16.6 5.5 L12.5 9 L11 7.5 Z M7.5 11 L9 12.5 L5.5 16.4 L3.5 14.5 Z" fill="#bbdefb"/><circle cx="10" cy="10" r="2" fill="#fff" stroke="#1e88e5" stroke-width="1.7"/></svg>
<svg class="b" style="left:831.0px;top:443.1px;" width="25" height="25" viewBox="0 0 25 25"><defs><linearGradient id="mg1" x1="0.15" y1="0.1" x2="0.85" y2="0.9"><stop offset="0" stop-color="#aefeff"/><stop offset="1" stop-color="#62deff"/></linearGradient></defs><path d="M16.3 16.6 L22.6 22.4" stroke="#1591e2" stroke-width="3.1" stroke-linecap="butt"/><path d="M15.6 16 L17.6 17.8" stroke="#1d9ad0" stroke-width="3.1"/><circle cx="10" cy="10" r="9" fill="url(#mg1)"/></svg>
<svg class="b" style="left:831.0px;top:537.1px;" width="25" height="25" viewBox="0 0 25 25"><defs><linearGradient id="mg2" x1="0.15" y1="0.1" x2="0.85" y2="0.9"><stop offset="0" stop-color="#aefeff"/><stop offset="1" stop-color="#62deff"/></linearGradient></defs><path d="M16.3 16.6 L22.6 22.4" stroke="#1591e2" stroke-width="3.1" stroke-linecap="butt"/><path d="M15.6 16 L17.6 17.8" stroke="#1d9ad0" stroke-width="3.1"/><circle cx="10" cy="10" r="9" fill="url(#mg2)"/></svg>
<svg class="b" style="left:355.0px;top:1141px;" width="25" height="25" viewBox="0 0 25 25"><defs><linearGradient id="mg3" x1="0.15" y1="0.1" x2="0.85" y2="0.9"><stop offset="0" stop-color="#aefeff"/><stop offset="1" stop-color="#62deff"/></linearGradient></defs><path d="M16.3 16.6 L22.6 22.4" stroke="#1591e2" stroke-width="3.1" stroke-linecap="butt"/><path d="M15.6 16 L17.6 17.8" stroke="#1d9ad0" stroke-width="3.1"/><circle cx="10" cy="10" r="9" fill="url(#mg3)"/></svg>
<svg class="b" style="left:776.0px;top:1141px;" width="25" height="25" viewBox="0 0 25 25"><defs><linearGradient id="mg4" x1="0.15" y1="0.1" x2="0.85" y2="0.9"><stop offset="0" stop-color="#aefeff"/><stop offset="1" stop-color="#62deff"/></linearGradient></defs><path d="M16.3 16.6 L22.6 22.4" stroke="#1591e2" stroke-width="3.1" stroke-linecap="butt"/><path d="M15.6 16 L17.6 17.8" stroke="#1d9ad0" stroke-width="3.1"/><circle cx="10" cy="10" r="9" fill="url(#mg4)"/></svg>
<svg class="b" style="left:817.0px;top:1175.0px;" width="25" height="25" viewBox="0 0 25 25"><defs><linearGradient id="mg5" x1="0.15" y1="0.1" x2="0.85" y2="0.9"><stop offset="0" stop-color="#aefeff"/><stop offset="1" stop-color="#62deff"/></linearGradient></defs><path d="M16.3 16.6 L22.6 22.4" stroke="#1591e2" stroke-width="3.1" stroke-linecap="butt"/><path d="M15.6 16 L17.6 17.8" stroke="#1d9ad0" stroke-width="3.1"/><circle cx="10" cy="10" r="9" fill="url(#mg5)"/></svg>
<svg class="b" style="left:1582.8px;top:1228.0px;" width="25" height="25" viewBox="0 0 25 25"><defs><linearGradient id="mg6" x1="0.15" y1="0.1" x2="0.85" y2="0.9"><stop offset="0" stop-color="#aefeff"/><stop offset="1" stop-color="#62deff"/></linearGradient></defs><path d="M16.3 16.6 L22.6 22.4" stroke="#1591e2" stroke-width="3.1" stroke-linecap="butt"/><path d="M15.6 16 L17.6 17.8" stroke="#1d9ad0" stroke-width="3.1"/><circle cx="10" cy="10" r="9" fill="url(#mg6)"/></svg>
<svg class="b" style="left:858px;top:1177px;" width="20" height="21" viewBox="0 0 20 21"><path d="M0.8 0.2 H10.6 L15.2 4.8 V19.8 H0.8 Z" fill="#90caf9"/><path d="M10.2 1.4 L14.2 5.4 H10.2 Z" fill="#e1f5fe"/><path d="M10 19.4 L17.2 12.6" stroke="#ff9800" stroke-width="2.3"/><path d="M9.4 20 L10.6 18.8" stroke="#3e2723" stroke-width="1.8"/><path d="M17 12.8 L18.2 11.7" stroke="#ef7c7c" stroke-width="2.3"/><path d="M16.2 13.5 L17 12.8" stroke="#cfd8dc" stroke-width="2.3"/></svg>
<svg class="b" style="left:560.6px;top:688.7px;" width="19" height="13" viewBox="0 0 19 13"><path d="M0.2 4.1 H11 V0.2 L18.3 6.2 L11 12.3 V8.5 H0.2 Z" fill="#48ae4f"/></svg>
<svg class="b" style="left:1250.8px;top:577.2px;" width="19" height="13" viewBox="0 0 19 13"><path d="M0.2 4.1 H11 V0.2 L18.3 6.2 L11 12.3 V8.5 H0.2 Z" fill="#48ae4f"/></svg>
<svg class="b" style="left:1572px;top:450px;" width="18" height="17" viewBox="0 0 18 17"><rect x="0.3" y="1" width="17.6" height="15.6" rx="1.6" fill="#cfd8dc"/><path d="M0.3 6.3 V2.8 Q0.3 1 2.1 1 H16.1 Q17.9 1 17.9 2.8 V6.3 Z" fill="#f44336"/><rect x="0.3" y="6.2" width="17.6" height="0.8" fill="#cfe6ea"/><rect x="4.1" y="0" width="1.5" height="3.9" rx="0.7" fill="#b0bec5"/><rect x="12.5" y="0" width="1.5" height="3.9" rx="0.7" fill="#b0bec5"/><g fill="#8fa4ae"><rect x="4.0" y="8.0" width="1.9" height="1.7"/><rect x="6.9" y="8.0" width="1.9" height="1.7"/><rect x="9.8" y="8.0" width="1.9" height="1.7"/><rect x="12.7" y="8.0" width="1.9" height="1.7"/><rect x="4.0" y="10.7" width="1.9" height="1.7"/><rect x="6.9" y="10.7" width="1.9" height="1.7"/><rect x="9.8" y="10.7" width="1.9" height="1.7"/><rect x="12.7" y="10.7" width="1.9" height="1.7"/><rect x="4.0" y="13.4" width="1.9" height="1.7"/><rect x="6.9" y="13.4" width="1.9" height="1.7"/><rect x="9.8" y="13.4" width="1.9" height="1.7"/><rect x="12.7" y="13.4" width="1.9" height="1.7"/></g></svg>
<svg class="b" style="left:1572px;top:497px;" width="18" height="17" viewBox="0 0 18 17"><rect x="0.3" y="1" width="17.6" height="15.6" rx="1.6" fill="#cfd8dc"/><path d="M0.3 6.3 V2.8 Q0.3 1 2.1 1 H16.1 Q17.9 1 17.9 2.8 V6.3 Z" fill="#f44336"/><rect x="0.3" y="6.2" width="17.6" height="0.8" fill="#cfe6ea"/><rect x="4.1" y="0" width="1.5" height="3.9" rx="0.7" fill="#b0bec5"/><rect x="12.5" y="0" width="1.5" height="3.9" rx="0.7" fill="#b0bec5"/><g fill="#8fa4ae"><rect x="4.0" y="8.0" width="1.9" height="1.7"/><rect x="6.9" y="8.0" width="1.9" height="1.7"/><rect x="9.8" y="8.0" width="1.9" height="1.7"/><rect x="12.7" y="8.0" width="1.9" height="1.7"/><rect x="4.0" y="10.7" width="1.9" height="1.7"/><rect x="6.9" y="10.7" width="1.9" height="1.7"/><rect x="9.8" y="10.7" width="1.9" height="1.7"/><rect x="12.7" y="10.7" width="1.9" height="1.7"/><rect x="4.0" y="13.4" width="1.9" height="1.7"/><rect x="6.9" y="13.4" width="1.9" height="1.7"/><rect x="9.8" y="13.4" width="1.9" height="1.7"/><rect x="12.7" y="13.4" width="1.9" height="1.7"/></g></svg>
<svg class="b" style="left:1572px;top:542px;" width="18" height="17" viewBox="0 0 18 17"><rect x="0.3" y="1" width="17.6" height="15.6" rx="1.6" fill="#cfd8dc"/><path d="M0.3 6.3 V2.8 Q0.3 1 2.1 1 H16.1 Q17.9 1 17.9 2.8 V6.3 Z" fill="#f44336"/><rect x="0.3" y="6.2" width="17.6" height="0.8" fill="#cfe6ea"/><rect x="4.1" y="0" width="1.5" height="3.9" rx="0.7" fill="#b0bec5"/><rect x="12.5" y="0" width="1.5" height="3.9" rx="0.7" fill="#b0bec5"/><g fill="#8fa4ae"><rect x="4.0" y="8.0" width="1.9" height="1.7"/><rect x="6.9" y="8.0" width="1.9" height="1.7"/><rect x="9.8" y="8.0" width="1.9" height="1.7"/><rect x="12.7" y="8.0" width="1.9" height="1.7"/><rect x="4.0" y="10.7" width="1.9" height="1.7"/><rect x="6.9" y="10.7" width="1.9" height="1.7"/><rect x="9.8" y="10.7" width="1.9" height="1.7"/><rect x="12.7" y="10.7" width="1.9" height="1.7"/><rect x="4.0" y="13.4" width="1.9" height="1.7"/><rect x="6.9" y="13.4" width="1.9" height="1.7"/><rect x="9.8" y="13.4" width="1.9" height="1.7"/><rect x="12.7" y="13.4" width="1.9" height="1.7"/></g></svg>
<svg class="b" style="left:1572px;top:607px;" width="18" height="17" viewBox="0 0 18 17"><rect x="0.3" y="1" width="17.6" height="15.6" rx="1.6" fill="#cfd8dc"/><path d="M0.3 6.3 V2.8 Q0.3 1 2.1 1 H16.1 Q17.9 1 17.9 2.8 V6.3 Z" fill="#f44336"/><rect x="0.3" y="6.2" width="17.6" height="0.8" fill="#cfe6ea"/><rect x="4.1" y="0" width="1.5" height="3.9" rx="0.7" fill="#b0bec5"/><rect x="12.5" y="0" width="1.5" height="3.9" rx="0.7" fill="#b0bec5"/><g fill="#8fa4ae"><rect x="4.0" y="8.0" width="1.9" height="1.7"/><rect x="6.9" y="8.0" width="1.9" height="1.7"/><rect x="9.8" y="8.0" width="1.9" height="1.7"/><rect x="12.7" y="8.0" width="1.9" height="1.7"/><rect x="4.0" y="10.7" width="1.9" height="1.7"/><rect x="6.9" y="10.7" width="1.9" height="1.7"/><rect x="9.8" y="10.7" width="1.9" height="1.7"/><rect x="12.7" y="10.7" width="1.9" height="1.7"/><rect x="4.0" y="13.4" width="1.9" height="1.7"/><rect x="6.9" y="13.4" width="1.9" height="1.7"/><rect x="9.8" y="13.4" width="1.9" height="1.7"/><rect x="12.7" y="13.4" width="1.9" height="1.7"/></g></svg>
<svg class="b" style="left:1609px;top:745px;" width="21" height="18" viewBox="0 0 21 18"><defs><linearGradient id="fl1" x1="0" x2="1"><stop offset="0" stop-color="#4a4a4a"/><stop offset=".35" stop-color="#6a6a6a"/><stop offset="1" stop-color="#2f2f2f"/></linearGradient><linearGradient id="fl2" x1="0" x2="1"><stop offset="0" stop-color="#ff5a2e"/><stop offset=".35" stop-color="#ff7043"/><stop offset="1" stop-color="#f4360f"/></linearGradient><linearGradient id="fl3" x1="0" x2="1"><stop offset="0" stop-color="#ffe94a"/><stop offset=".35" stop-color="#fff47a"/><stop offset="1" stop-color="#fdd10a"/></linearGradient></defs><rect x="0" y="0" width="21" height="6" fill="url(#fl1)"/><rect x="0" y="5.8" width="21" height="6" fill="url(#fl2)"/><rect x="0" y="11.7" width="21" height="6" fill="url(#fl3)"/></svg>
<svg class="b" style="left:1482px;top:813px;" width="29" height="38" viewBox="0 0 29 38"><path d="M0 0 H19.6 L29 9.6 V38 H0 Z" fill="#90caf9"/><path d="M19 1 L28 10 H19 Z" fill="#e1f5fe"/><g fill="#1976d2"><rect x="7" y="16.4" width="15.7" height="1.7"/><rect x="7" y="20.2" width="11.9" height="1.7"/><rect x="7" y="23.8" width="15.7" height="1.7"/><rect x="7" y="27.4" width="11.9" height="1.7"/></g></svg>
<svg class="b" style="left:1582.8px;top:816px;" width="36" height="35" viewBox="0 0 36 35"><rect x="6.1" y="0.4" width="23" height="10" fill="#90caf9"/><rect x="4.2" y="6.6" width="1.9" height="3.4" rx="0.6" fill="#424242"/><rect x="29.1" y="6.6" width="1.9" height="3.4" rx="0.6" fill="#424242"/><rect x="0" y="9.2" width="35.3" height="19.8" rx="3.2" fill="#424242"/><path d="M0 18 V12.4 Q0 9.2 3.2 9.2 H32.1 Q35.3 9.2 35.3 12.4 V18 Z" fill="#616161"/><rect x="30.9" y="12" width="2.2" height="2" rx="0.4" fill="#00e676"/><rect x="4.2" y="22" width="27" height="2.4" rx="1" fill="#242424"/><rect x="6.1" y="22.9" width="23" height="11.6" fill="#90caf9"/><rect x="6.1" y="22.9" width="23" height="1.8" fill="#42a5f5"/><rect x="10.3" y="26.6" width="15.4" height="1.5" fill="#1976d2"/><rect x="10.3" y="30.3" width="11.7" height="1.5" fill="#1976d2"/></svg>
<svg class="b" style="left:1601.5px;top:985px;" width="22" height="22" viewBox="0 0 22 22"><g fill="none" stroke="#3498db" stroke-width="2"><path d="M12.2 3.1 A7.9 7.9 0 0 0 4.6 15.4"/><path d="M9.8 18.9 A7.9 7.9 0 0 0 17.4 6.6"/></g><path d="M3.2 17.4 L8.2 18.4 L7.4 12.8 Z" fill="#2e93dd"/><path d="M18.8 4.6 L13.8 3.6 L14.6 9.2 Z" fill="#2e93dd"/></svg>
<svg class="b" style="left:357.4px;top:939.2px;" width="18" height="18" viewBox="0 0 18 18"><g transform="rotate(42 9 9)" fill="none" stroke="#4656bd" stroke-linecap="round"><path d="M5.1 15.6 V3.8 A3.9 3.9 0 0 1 12.9 3.8 V14.4 A2.5 2.5 0 0 1 7.9 14.4 V5.2" stroke-width="2.1"/><path d="M5.1 15.6 A3.9 3.9 0 0 0 12.9 15.6 V13" stroke-width="2.1"/></g></svg>
<svg class="b" style="left:356.7px;top:1308.7px;" width="16" height="16" viewBox="0 0 16 16"><path d="M0.3 1.6 Q0.3 0.3 1.6 0.3 H4.4 Q5.6 0.3 5.6 1.6 L5.4 4.6 Q5.3 5.4 4.5 5.6 L3.2 6 Q5 9.8 8.8 11.7 L9.4 10.4 Q9.7 9.7 10.5 9.6 L13.6 9.6 Q14.8 9.7 14.8 10.9 V13.6 Q14.8 14.9 13.5 14.9 Q7.5 14.9 3.8 11.2 Q0.3 7.5 0.3 1.6 Z" fill="#009f8e"/></svg>
<svg class="b" style="left:356px;top:1330px;" width="17" height="16" viewBox="0 0 17 16"><rect x="6.4" y="0" width="8.3" height="4.6" rx="0.8" fill="#c5cae9"/><rect x="4.6" y="1.6" width="12.1" height="13.4" rx="1.2" fill="#5c6bc0"/><rect x="6.4" y="0" width="8.3" height="3.6" rx="0.8" fill="#c5cae9"/><rect x="5.8" y="3.6" width="9.6" height="1.3" fill="#1a237e"/><rect x="0" y="0" width="5" height="16" rx="1.6" fill="#283593"/><g fill="#e8eaf6"><rect x="6.0" y="7.1" width="1.3" height="1.2"/><rect x="7.9" y="7.1" width="1.3" height="1.2"/><rect x="9.8" y="7.1" width="1.3" height="1.2"/><rect x="6.0" y="9.5" width="1.3" height="1.2"/><rect x="7.9" y="9.5" width="1.3" height="1.2"/><rect x="9.8" y="9.5" width="1.3" height="1.2"/><rect x="6.0" y="11.9" width="1.3" height="1.2"/><rect x="7.9" y="11.9" width="1.3" height="1.2"/><rect x="9.8" y="11.9" width="1.3" height="1.2"/><rect x="13" y="7.1" width="2.4" height="1.2"/><rect x="13" y="9.5" width="2.4" height="1.2"/></g><rect x="13" y="11.8" width="2.4" height="1.4" rx="0.5" fill="#8bc34a"/></svg>
<svg class="b" style="left:356px;top:1354px;" width="17" height="12" viewBox="0 0 17 12"><rect x="0" y="0" width="17" height="12" rx="1.4" fill="#cfd8dc"/><path d="M0.4 1 L8.5 7.4 L16.6 1" fill="none" stroke="#90a4ae" stroke-width="1.1"/></svg>
<svg class="b" style="left:471.1px;top:1430.2px;" width="16" height="16" viewBox="0 0 16 16"><circle cx="8" cy="8" r="7.4" fill="#e74c3c"/><path d="M8 4.4 V11.6 M4.4 8 H11.6" stroke="#fff" stroke-width="2.1"/></svg>
<svg class="b" style="left:688.7px;top:1430.2px;" width="16" height="16" viewBox="0 0 16 16"><circle cx="8" cy="8" r="7.4" fill="#e74c3c"/><path d="M8 4.4 V11.6 M4.4 8 H11.6" stroke="#fff" stroke-width="2.1"/></svg>
<svg class="b" style="left:1974px;top:1323px;" width="37" height="35" viewBox="0 0 37 35"><rect x="6.9" y="0.2" width="19.1" height="3" fill="#90caf9"/><rect x="5.1" y="3" width="22.9" height="3.2" fill="#42a5f5"/><rect x="3" y="6" width="29.7" height="18" fill="#90caf9"/><rect x="3" y="21.6" width="29.7" height="2.4" fill="#64b5f6"/><g fill="#1976d2"><rect x="5.9" y="10.2" width="6.9" height="1.7"/><rect x="14.9" y="10.2" width="6" height="1.7"/><rect x="5.9" y="14" width="10.6" height="1.7"/></g><path d="M30.5 4.9 L36.4 11.7 H32.7 V24.8 H28 V11.7 H24.4 Z" fill="#2196f3"/><path d="M0.1 23.8 H33 V32.3 Q33 34.7 30.6 34.7 H2.5 Q0.1 34.7 0.1 32.3 Z" fill="#ffc107"/><path d="M11 22 H22 V23.6 A5.5 5.5 0 0 1 11 23.6 Z" fill="#64b5f6"/><path d="M12.9 21.6 H20.1 V23.4 A3.6 3.8 0 0 1 12.9 23.4 Z" fill="#90caf9"/></svg>
</body></html>
